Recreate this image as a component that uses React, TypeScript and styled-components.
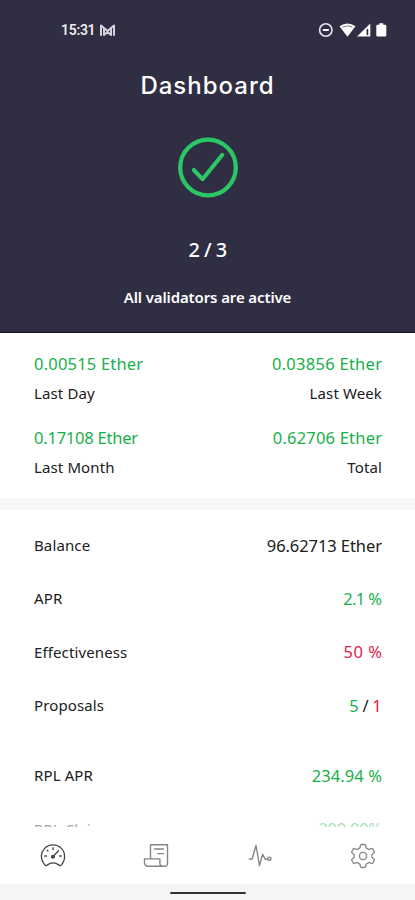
import React from "react";
import styled, { createGlobalStyle } from "styled-components";

const GlobalStyle = createGlobalStyle`
  * { box-sizing: border-box; }
  body { margin: 0; background: #fff; }
`;

const green = "#19b04b";
const red = "#e02447";

const Screen = styled.div`
  width: 415px;
  height: 900px;
  display: flex;
  flex-direction: column;
  overflow: hidden;
  background: #fff;
  color: #202020;
  font-family: "Noto Sans", sans-serif;
`;

const Header = styled.header`
  flex: none;
  height: 333px;
  display: flex;
  flex-direction: column;
  align-items: center;
  background: #302e43;
  border-bottom: 1px solid #14131f;
  color: #fff;
`;

const StatusBar = styled.div`
  width: 100%;
  height: 60px;
  padding: 0 28px 0 61px;
  display: flex;
  align-items: center;
  justify-content: space-between;
`;

const StatusGroup = styled.div`
  display: flex;
  align-items: center;
`;

const Clock = styled.span`
  margin-right: 4px;
  color: #ecebf0;
  font: 600 14px/20px Roboto, sans-serif;
  letter-spacing: -0.3px;
`;

const Title = styled.h1`
  margin: 9px 0 0;
  height: 34px;
  font: 500 24px/34px Inter, sans-serif;
  letter-spacing: 1px;
`;

const CheckIcon = styled.svg`
  flex: none;
  margin-top: 34px;
`;

const Count = styled.div`
  margin-top: 37px;
  font-size: 20px;
  line-height: 28px;
  font-weight: 500;
  letter-spacing: -0.6px;
`;

const Summary = styled.div`
  margin-top: 22px;
  font-size: 15px;
  line-height: 22px;
  font-weight: 600;
  letter-spacing: -0.12px;
`;

const Earnings = styled.section`
  flex: none;
  height: 165px;
  padding: 19px 33px 0 34px;
  display: grid;
  grid-template-columns: 1fr 1fr;
  grid-auto-rows: 74px;
`;

const Stat = styled.div<{ $end?: boolean }>`
  display: flex;
  flex-direction: column;
  gap: 6px;
  align-items: ${(p) => (p.$end ? "flex-end" : "flex-start")};
`;

const Amount = styled.span<{ $color?: string; $tracking?: number }>`
  font-size: 16.5px;
  line-height: 24px;
  letter-spacing: ${(p) => p.$tracking ?? 0.2}px;
  margin-right: ${(p) => -(p.$tracking ?? 0.2)}px;
  white-space: nowrap;
  color: ${(p) => p.$color ?? "inherit"};
`;

const Label = styled.span`
  font-size: 15px;
  line-height: 23px;
  letter-spacing: 0.12px;
`;

const Divider = styled.div`
  flex: none;
  height: 12px;
  background: #f7f7f7;
`;

const Details = styled.section`
  flex: none;
  height: 317px;
  padding: 9px 33px 0 34px;
  overflow: hidden;
`;

const Row = styled.div<{ $spaced?: boolean }>`
  height: 53.3px;
  margin-top: ${(p) => (p.$spaced ? "17px" : "0")};
  display: flex;
  align-items: center;
  justify-content: space-between;
`;

const CutRow = styled(Row)`
  height: 24px;
  margin-top: 15px;
  opacity: 0.4;
`;

const Tabs = styled.nav`
  flex: none;
  height: 57px;
  display: grid;
  grid-template-columns: repeat(4, 1fr);
  place-items: center;
  padding-left: 1px;
  color: #858585;
`;

const Tab = styled.div<{ $active?: boolean }>`
  display: flex;
  color: ${(p) => (p.$active ? "#444" : "inherit")};
`;

const GestureArea = styled.div`
  flex: 1;
  display: flex;
  justify-content: center;
  padding-top: 8px;
  background: #f5f5f5;
`;

const GestureBar = styled.div`
  width: 76px;
  height: 2px;
  border-radius: 1px;
  background: #333;
`;

const stroke = {
  fill: "none",
  stroke: "currentColor",
  strokeLinecap: "round" as const,
  strokeLinejoin: "round" as const,
};

const MailIcon = () => (
  <svg width="17" height="14" viewBox="0 0 17 14" {...stroke} stroke="#d5d4dc">
    <path d="M2 12V2.5L8.5 8 15 2.5V12M5 5.5V12L8.5 9 12 12V5.5" strokeWidth="2" />
  </svg>
);

const SystemIcons = () => (
  <svg width="70" height="18" viewBox="0 0 70 18">
    <circle cx="8.8" cy="9" r="6.2" fill="none" stroke="#e8e7ee" strokeWidth="1.6" />
    <path d="M5.8 9h6" stroke="#fff" strokeWidth="2" />
    <path d="M22.5 5.3Q30.5-.2 38.5 5.3L30.5 15.8Z" fill="#fff" />
    <path d="M25.7 6.1q4.8-2.5 9.6 0" fill="none" stroke="#77758a" strokeWidth="1" />
    <path d="M40 15.5 53.3 2.6V15.5Z" fill="#fff" />
    <path d="M50.4 8v6.2" stroke="#302e43" strokeWidth="1.7" />
    <path d="M62.3 2.2h4v1.5h1.7q1.3 0 1.3 1.3v9.2q0 1.3-1.3 1.3h-7.4q-1.3 0-1.3-1.3V5q0-1.3 1.3-1.3h1.7Z" fill="#fff" />
  </svg>
);

const GaugeIcon = () => (
  <svg width="26" height="26" viewBox="0 0 26 26" {...stroke} strokeWidth="1.3">
    <path d="M5.2 22.2C-.7 16 1.1 9 4.6 5.4a11.7 11.7 0 0 1 16.8 0c4.4 4.5 4.3 12-.5 16.8q-1.2 1-2.2-.3-5.7-4-11.3 0-1 1.3-2.2.3Z" />
    <path d="M13 4.7v2M7.1 7.1l1 1M4.8 13h1.7M19.5 13h1.7M13.3 13.2l5.2-5.5" />
    <circle cx="13" cy="13.8" r="1.4" fill="currentColor" />
  </svg>
);

const ScrollIcon = () => (
  <svg width="26" height="26" viewBox="0 0 26 26" {...stroke} strokeWidth="1.4">
    <path d="M7.5 15.5V1.8h17v18.1a3.4 3.4 0 0 1-3.4 3.4H4.8a3.3 3.3 0 0 1-3.3-3.3v-4.1h15.4V20q0 3.3 3.4 3.3" />
    <path d="M11.5 6h9M14.8 10.6h5.7" />
  </svg>
);

const PulseIcon = () => (
  <svg width="26" height="26" viewBox="0 0 26 26" {...stroke} strokeWidth="1.4">
    <path d="M2.5 16h2.6L9 2.5l3.5 20 3.2-11.2 2.4 5h2.5" />
    <circle cx="22.4" cy="15.7" r="1.6" />
  </svg>
);

const GearIcon = () => (
  <svg width="26" height="26" viewBox="0 0 26 26" {...stroke} strokeWidth="1.3">
    <path d="M11.5 1.5h3q.8 0 1 .8l.5 2.2q.2.8 1 .9.6.3 1.1.7.6.4 1.4.2l2-.8q.8-.3 1.2.4l1.5 2.6q.4.7-.2 1.2l-1.7 1.5q-.6.5-.5 1.3v1q-.1.8.5 1.3l1.7 1.5q.6.5.2 1.2l-1.5 2.6q-.4.7-1.2.4l-2-.8q-.8-.2-1.4.2-.5.4-1.1.7-.8.1-1 .9l-.5 2.2q-.2.8-1 .8h-3q-.8 0-1-.8l-.5-2.2q-.2-.8-1-.9-.6-.3-1.1-.7-.6-.4-1.4-.2l-2 .8q-.8.3-1.2-.4l-1.5-2.6q-.4-.7.2-1.2L3.700 14.8q.6-.5.5-1.300v-1q.1-.8-.5-1.300L2 9.700q-.6-.5-.2-1.200l1.500-2.600q.4-.7 1.200-.4l2 .8q.8.2 1.400-.2.5-.4 1.100-.7.8-.1 1-.9l.5-2.200q.2-.8 1-.8Z" />
    <circle cx="13" cy="13" r="3.6" />
  </svg>
);

export default function App() {
  return (
    <>
      <GlobalStyle />
      <Screen>
        <Header>
          <StatusBar>
            <StatusGroup>
              <Clock>15:31</Clock>
              <MailIcon />
            </StatusGroup>
            <SystemIcons />
          </StatusBar>
          <Title>Dashboard</Title>
          <CheckIcon width="62" height="62" viewBox="0 0 62 62" {...stroke} stroke="#2bc765">
            <circle cx="31" cy="30.5" r="27.8" strokeWidth="4.2" />
            <path d="m16.800 33 8.700 9.200 19.900-24.400" strokeWidth="4.100" />
          </CheckIcon>
          <Count>2 / 3</Count>
          <Summary>All validators are active</Summary>
        </Header>
        <Earnings>
          <Stat><Amount $color={green}>0.00515 Ether</Amount><Label>Last Day</Label></Stat>
          <Stat $end><Amount $color={green} $tracking={0.27}>0.03856 Ether</Amount><Label>Last Week</Label></Stat>
          <Stat><Amount $color={green} $tracking={-0.22}>0.17108 Ether</Amount><Label>Last Month</Label></Stat>
          <Stat $end><Amount $color={green}>0.62706 Ether</Amount><Label>Total</Label></Stat>
        </Earnings>
        <Divider />
        <Details>
          <Row><Label>Balance</Label><Amount $tracking={-0.08}>96.62713 Ether</Amount></Row>
          <Row><Label>APR</Label><Amount $color={green} $tracking={-0.65}>2.1 %</Amount></Row>
          <Row><Label>Effectiveness</Label><Amount $color={red} $tracking={0.5}>50 %</Amount></Row>
          <Row>
            <Label>Proposals</Label>
            <Amount $tracking={-0.4}>
              <Amount $color={green} $tracking={-0.4}>5</Amount> / <Amount $color={red} $tracking={-0.4}>1</Amount>
            </Amount>
          </Row>
          <Row $spaced><Label>RPL APR</Label><Amount $color={green} $tracking={0.1}>234.94 %</Amount></Row>
          <CutRow><Label>RPL Claim</Label><Amount $color={green} $tracking={-0.3}>200.00%</Amount></CutRow>
        </Details>
        <Tabs>
          <Tab $active><GaugeIcon /></Tab>
          <Tab><ScrollIcon /></Tab>
          <Tab><PulseIcon /></Tab>
          <Tab><GearIcon /></Tab>
        </Tabs>
        <GestureArea><GestureBar /></GestureArea>
      </Screen>
    </>
  );
}
